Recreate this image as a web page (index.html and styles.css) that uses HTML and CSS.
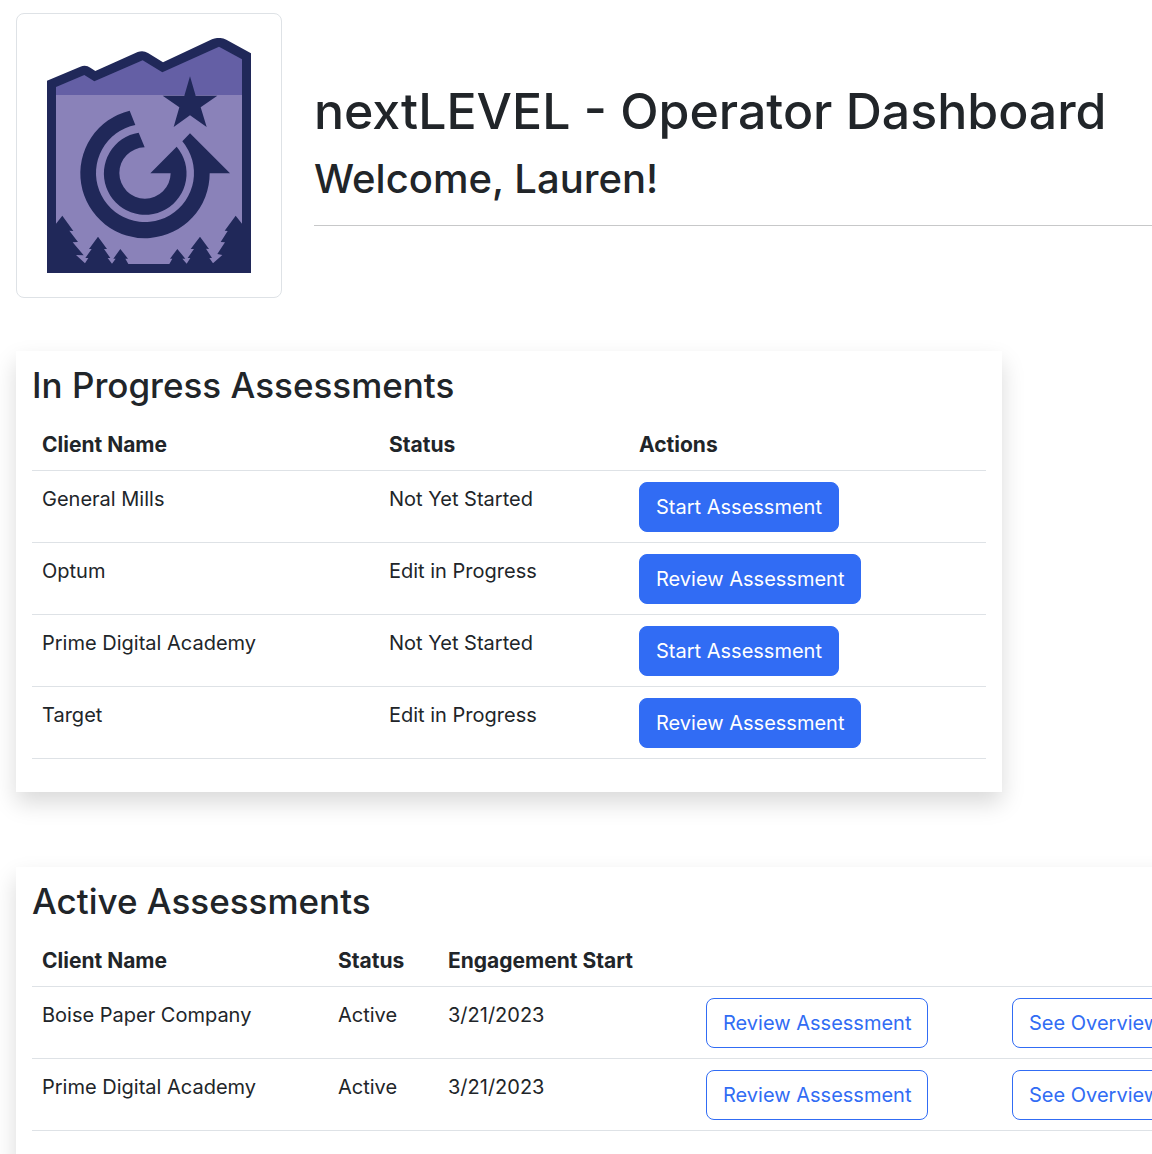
FILE: index.html
```html
<!DOCTYPE html>
<html lang="en">
<head>
  <meta charset="utf-8">
  <meta name="viewport" content="width=device-width, initial-scale=1">
  <title>nextLEVEL - Operator Dashboard</title>
  <link rel="stylesheet" href="styles.css">
</head>
<body>
  <header class="masthead">
    <div class="logo-frame">
      <svg class="logo" viewBox="141 114 612 705" role="img" aria-label="nextLEVEL">
        <path fill="#202859" d="M141 242 L241 200 Q258 194 271 203 L286 213 L413 156 Q430 150 444 159 L489 187 L636 118 Q657 109 679 119 L753 160 V819 H141Z"/>
        <path fill="#645fa5" d="M168 261 L253 225 L283 244 L428 181 L487 217 L657 140 L726 178 V286 H168Z"/>
        <path fill="#8a82b9" d="M168 285 H726 V671 L707 647 L674 692 L683 693 L662 726 L675 727 L652 762 L667 765 L639 790 L628 774 L636 774 L618 746 L627 747 L600 710 L572 747 L582 747 L563 774 L571 774 L560 791 L547 776 H556 L532 747 L510 776 H517 L508 792 H385 L376 776 H384 L361 747 L340 776 H347 L336 791 L323 774 H331 L312 747 H321 L294 710 L267 747 H275 L256 774 H265 L255 790 L228 765 L251 766 L218 727 L234 726 L208 692 L220 693 L187 647 L168 671Z"/>
        <path fill="#202859" d="M389 332 A194 194 0 1 0 629 520 H690 L570 400 L547 424 A147 147 0 1 1 406 375Z"/>
        <path fill="#202859" d="M416 398 A124 124 0 1 0 530 440 L451 520 H512 A77 77 0 1 1 434 442Z"/>
        <path fill="#202859" d="M570 229 L587 287 H652 L602 322 L620 381 L570 346 L521 381 L538 322 L488 287 H553Z"/>
      </svg>
    </div>
    <div class="masthead-text">
      <h1 class="title">nextLEVEL - Operator Dashboard</h1>
      <h2 class="welcome">Welcome, Lauren!</h2>
      <hr class="rule">
    </div>
  </header>

  <main class="panels">
    <section class="card card-progress">
      <h3 class="card-title">In Progress Assessments</h3>
      <table class="table">
        <colgroup><col class="progress-client"><col class="progress-status"><col></colgroup>
        <thead>
          <tr><th scope="col">Client Name</th><th scope="col">Status</th><th scope="col">Actions</th></tr>
        </thead>
        <tbody>
          <tr><td>General Mills</td><td>Not Yet Started</td><td><button type="button" class="btn btn-primary">Start Assessment</button></td></tr>
          <tr><td>Optum</td><td>Edit in Progress</td><td><button type="button" class="btn btn-primary">Review Assessment</button></td></tr>
          <tr><td>Prime Digital Academy</td><td>Not Yet Started</td><td><button type="button" class="btn btn-primary">Start Assessment</button></td></tr>
          <tr><td>Target</td><td>Edit in Progress</td><td><button type="button" class="btn btn-primary">Review Assessment</button></td></tr>
        </tbody>
      </table>
    </section>

    <section class="card card-active">
      <h3 class="card-title">Active Assessments</h3>
      <table class="table">
        <colgroup><col class="active-client"><col class="active-status"><col class="active-start"><col class="active-review"><col></colgroup>
        <thead>
          <tr><th scope="col">Client Name</th><th scope="col">Status</th><th scope="col">Engagement Start</th><th></th><th></th></tr>
        </thead>
        <tbody>
          <tr><td>Boise Paper Company</td><td>Active</td><td>3/21/2023</td><td><button type="button" class="btn btn-outline">Review Assessment</button></td><td><button type="button" class="btn btn-outline">See Overview</button></td></tr>
          <tr><td>Prime Digital Academy</td><td>Active</td><td>3/21/2023</td><td><button type="button" class="btn btn-outline">Review Assessment</button></td><td><button type="button" class="btn btn-outline">See Overview</button></td></tr>
        </tbody>
      </table>
    </section>
  </main>
</body>
</html>
```
FILE: styles.css
```css
*,
*::before,
*::after {
  box-sizing: border-box;
}

body {
  margin: 0;
  padding: 13px 16px 0;
  overflow-x: hidden;
  background: #fff;
  color: #212529;
  font-family: Inter, "Liberation Sans", sans-serif;
  font-size: 20px;
  line-height: 34px;
}

h1,
h2,
h3 {
  margin: 0;
  font-weight: 500;
  white-space: nowrap;
}

.masthead {
  display: flex;
  align-items: flex-start;
  gap: 32px;
  margin-right: -16px;
}

.logo-frame {
  flex: none;
  padding: 24px 30px;
  border: 1px solid #dee2e6;
  border-radius: 8px;
}

.logo {
  display: block;
  width: 204px;
  height: 235px;
}

.masthead-text {
  flex: 1;
  min-width: 0;
  padding-top: 66px;
}

.title {
  font-size: 50px;
  line-height: 64px;
}

.welcome {
  margin-top: 10px;
  font-size: 40px;
  line-height: 52px;
}

.rule {
  margin: 20px 0 0;
  border: 0;
  border-top: 1px solid #c7c8c9;
}

.panels {
  display: flex;
  flex-direction: column;
  gap: 75px;
  margin-top: 53px;
}

.card {
  padding: 12px 16px 33px;
  background: #fff;
  box-shadow: 0 11px 22px rgba(0, 0, 0, 0.15);
}

.card-progress {
  width: 88%;
}

.card-active {
  width: 130%;
}

.card-title {
  margin-bottom: 10px;
  font-size: 35px;
  line-height: 44px;
}

.table {
  width: 100%;
  table-layout: fixed;
  border-collapse: separate;
  border-spacing: 0;
}

.table th,
.table td {
  padding: 11px 10px 10px;
  border-bottom: 1px solid #dee2e6;
  text-align: left;
  vertical-align: top;
  white-space: nowrap;
}

.table th {
  padding-bottom: 8px;
  font-size: 21px;
  font-weight: 700;
}

.progress-client {
  width: 347px;
}

.progress-status {
  width: 250px;
}

.active-client {
  width: 296px;
}

.active-status {
  width: 110px;
}

.active-start {
  width: 258px;
}

.active-review {
  width: 306px;
}

.btn {
  display: block;
  padding: 7px 16px;
  border: 1px solid #316cf4;
  border-radius: 8px;
  font: inherit;
  cursor: pointer;
}

.btn-primary {
  background: #316cf4;
  color: #fff;
}

.btn-outline {
  background: transparent;
  color: #316cf4;
}
```
